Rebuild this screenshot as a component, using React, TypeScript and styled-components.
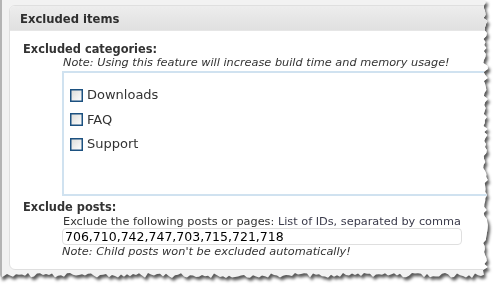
import { createGlobalStyle, styled } from "styled-components";

const GlobalStyle = createGlobalStyle`
  html, body {
    margin: 0;
    padding: 0;
    background: #ffffff;
  }
  body {
    font-family: "DejaVu Sans", Verdana, sans-serif;
    color: #333333;
  }
`;

// deterministic jitter for the torn paper edge
function tornPolygon() {
  let seed = 7;
  const rand = () => {
    seed = (seed * 9301 + 49297) % 233280;
    return seed / 233280;
  };
  const pts: string[] = ["0px 0px"];
  for (let y = 0; y <= 272; y += 3) {
    pts.push(`${(483 + rand() * 5).toFixed(1)}px ${y}px`);
  }
  for (let x = 484; x >= 0; x -= 3) {
    pts.push(`${x}px ${(273 + rand() * 5).toFixed(1)}px`);
  }
  pts.push("0px 275px");
  return `polygon(${pts.join(", ")})`;
}

const TORN = tornPolygon();

const categories = ["Downloads", "FAQ", "Support"];

function App() {
  return (
    <>
      <GlobalStyle />
      <Shadow>
        <Sheet>
          <Postbox>
            <Header>Excluded items</Header>
            <Inside>
              <Label>Excluded categories:</Label>
              <Note>Note: Using this feature will increase build time and memory usage!</Note>
              <CategoryBox>
                {categories.map((c) => (
                  <CheckRow key={c}>
                    <Check />
                    {c}
                  </CheckRow>
                ))}
              </CategoryBox>
              <Label $gap>Exclude posts:</Label>
              <Description>
                Exclude the following posts or pages: <Hint>List of IDs, separated by comma</Hint>
              </Description>
              <IdInput defaultValue="706,710,742,747,703,715,721,718" />
              <Note $flush>Note: Child posts won't be excluded automatically!</Note>
            </Inside>
          </Postbox>
        </Sheet>
      </Shadow>
    </>
  );
}

const Shadow = styled.div`
  width: 493px;
  height: 287px;
  filter: drop-shadow(2px 3px 1.5px rgba(0, 0, 0, 0.65));
`;

const Sheet = styled.div`
  width: 493px;
  height: 287px;
  box-sizing: border-box;
  background: #f2f2f2;
  border-left: 2px solid #b4b4b4;
  padding: 5px 0 0 7px;
  clip-path: ${TORN};
`;

const Postbox = styled.div`
  height: 265px;
  box-sizing: border-box;
  background: #ffffff;
  border: 1px solid #dfdfdf;
  border-radius: 6px;
  overflow: hidden;
`;

const Header = styled.h3`
  margin: 0;
  height: 25px;
  box-sizing: border-box;
  padding: 1px 0 0 10px;
  line-height: 24px;
  font-size: 11.6px;
  font-weight: bold;
  color: #2f2f2f;
  background: linear-gradient(#ededed, #e0e0e0);
  border-bottom: 1px solid #e6e6e6;
`;

const Inside = styled.div`
  padding: 12px 0 0 13px;
`;

const Label = styled.div<{ $gap?: boolean }>`
  font-size: 11.4px;
  font-weight: bold;
  line-height: 13px;
  margin-top: ${(p) => (p.$gap ? "5px" : "0")};
`;

const Note = styled.div<{ $flush?: boolean }>`
  font-size: 11.3px;
  font-style: italic;
  line-height: 13px;
  margin-left: ${(p) => (p.$flush ? "39px" : "40px")};
`;

const CategoryBox = styled.div`
  margin: 2px 0 0 39px;
  height: 125px;
  box-sizing: border-box;
  border: 2px solid #d0e2f0;
  border-right: none;
  padding: 15px 0 0 6px;
  display: flex;
  flex-direction: column;
  gap: 10.5px;
`;

const CheckRow = styled.label`
  display: flex;
  align-items: center;
  gap: 4px;
  font-size: 13px;
  line-height: 14px;
  color: #333333;
`;

const Check = styled.span`
  width: 13px;
  height: 13px;
  box-sizing: border-box;
  border: 1px solid #1c5180;
  box-shadow: inset 0 0 0 0.5px #1c5180;
  background: linear-gradient(135deg, #dcdcd8, #ffffff);
`;

const Description = styled.div`
  margin: 2px 0 0 40px;
  font-size: 11.3px;
  line-height: 12px;
`;

const Hint = styled.span`
  color: #3a3a4a;
`;

const IdInput = styled.input`
  display: block;
  margin: 0 0 0 39px;
  width: 400px;
  height: 17px;
  box-sizing: border-box;
  border: 1px solid #dfdfdf;
  border-radius: 4px;
  padding: 0 2px;
  font-family: "DejaVu Sans", Verdana, sans-serif;
  font-size: 12.5px;
  color: #000000;
  background: #ffffff;
  outline: none;
`;

export default App;
